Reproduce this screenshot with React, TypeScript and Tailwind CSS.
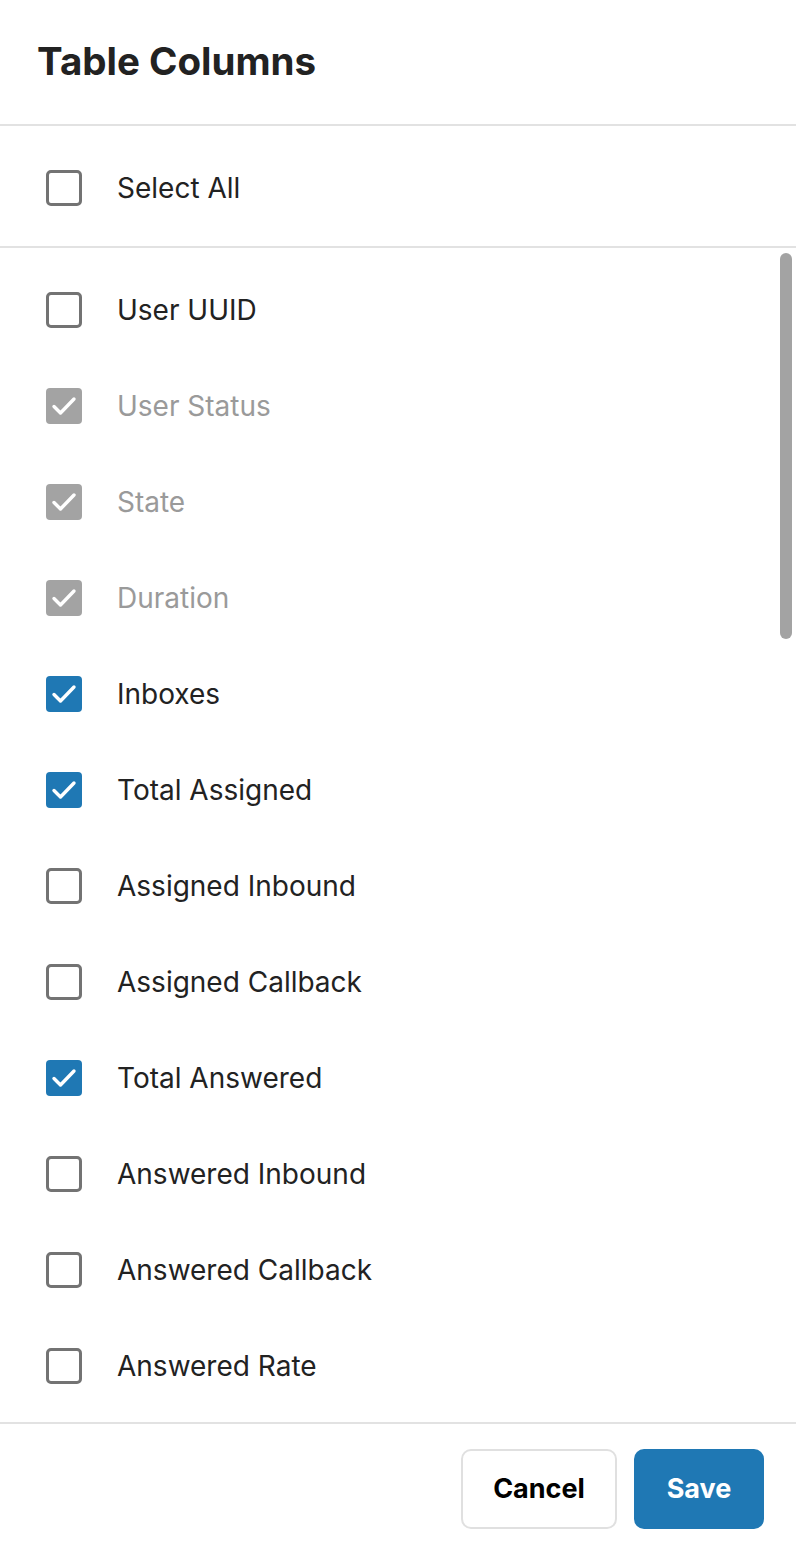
import React from "react";

type Col = { label: string; checked: boolean; locked?: boolean };

const columns: Col[] = [
  { label: "User UUID", checked: false },
  { label: "User Status", checked: true, locked: true },
  { label: "State", checked: true, locked: true },
  { label: "Duration", checked: true, locked: true },
  { label: "Inboxes", checked: true },
  { label: "Total Assigned", checked: true },
  { label: "Assigned Inbound", checked: false },
  { label: "Assigned Callback", checked: false },
  { label: "Total Answered", checked: true },
  { label: "Answered Inbound", checked: false },
  { label: "Answered Callback", checked: false },
  { label: "Answered Rate", checked: false },
];

function Check({ checked, locked }: { checked: boolean; locked?: boolean }) {
  if (!checked) {
    return <span className="block w-9 h-9 shrink-0 rounded-[5px] border-[3px] border-[#737373] bg-white" />;
  }
  return (
    <span
      className={`flex w-9 h-9 shrink-0 items-center justify-center rounded-[4px] ${
        locked ? "bg-[#a3a3a3]" : "bg-[#1f78b4]"
      }`}
    >
      <svg className="w-9 h-9" viewBox="0 0 36 36" fill="none" stroke="white" strokeWidth={3.4} strokeLinecap="round" strokeLinejoin="round">
        <path d="M8 18.5l6.5 6.5L28 11" />
      </svg>
    </span>
  );
}

function Row({ col }: { col: Col }) {
  return (
    <div className="flex items-center h-24 pl-[46px]">
      <Check checked={col.checked} locked={col.locked} />
      <span className={`ml-[35px] text-[28px] ${col.locked ? "text-[#9a9a9a]" : "text-[#222]"}`}>{col.label}</span>
    </div>
  );
}

export default function App() {
  return (
    <div className="w-[796px] h-[1554px] bg-white flex flex-col" style={{ fontFamily: "Inter, 'Liberation Sans', sans-serif" }}>
      {/* Header */}
      <div className="h-[126px] shrink-0 flex items-center pl-[37px] border-b-2 border-[#e2e2e2]">
        <h1 className="text-[38.5px] font-bold text-[#222]">Table Columns</h1>
      </div>

      {/* Select all */}
      <div className="h-[122px] shrink-0 flex items-center pl-[46px] pt-[3px] border-b-2 border-[#e2e2e2]">
        <Check checked={false} />
        <span className="ml-[35px] text-[28px] text-[#222]">Select All</span>
      </div>

      {/* List */}
      <div className="relative flex-1 overflow-hidden pt-[14px]">
        {columns.map((c) => (
          <Row key={c.label} col={c} />
        ))}
        <div className="absolute right-[4px] top-[5px] w-[12px] h-[386px] rounded-full bg-[#a3a3a3]" />
      </div>

      {/* Footer */}
      <div className="h-[132px] shrink-0 border-t-2 border-[#e2e2e2] flex items-center justify-end gap-[17px] pr-[32px]">
        <button className="w-[156px] h-[80px] rounded-[10px] border-2 border-[#e0e0e0] bg-white text-[27px] font-bold text-black">
          Cancel
        </button>
        <button className="w-[130px] h-[80px] rounded-[10px] bg-[#1f78b4] text-[27px] font-bold text-white">
          Save
        </button>
      </div>
    </div>
  );
}
